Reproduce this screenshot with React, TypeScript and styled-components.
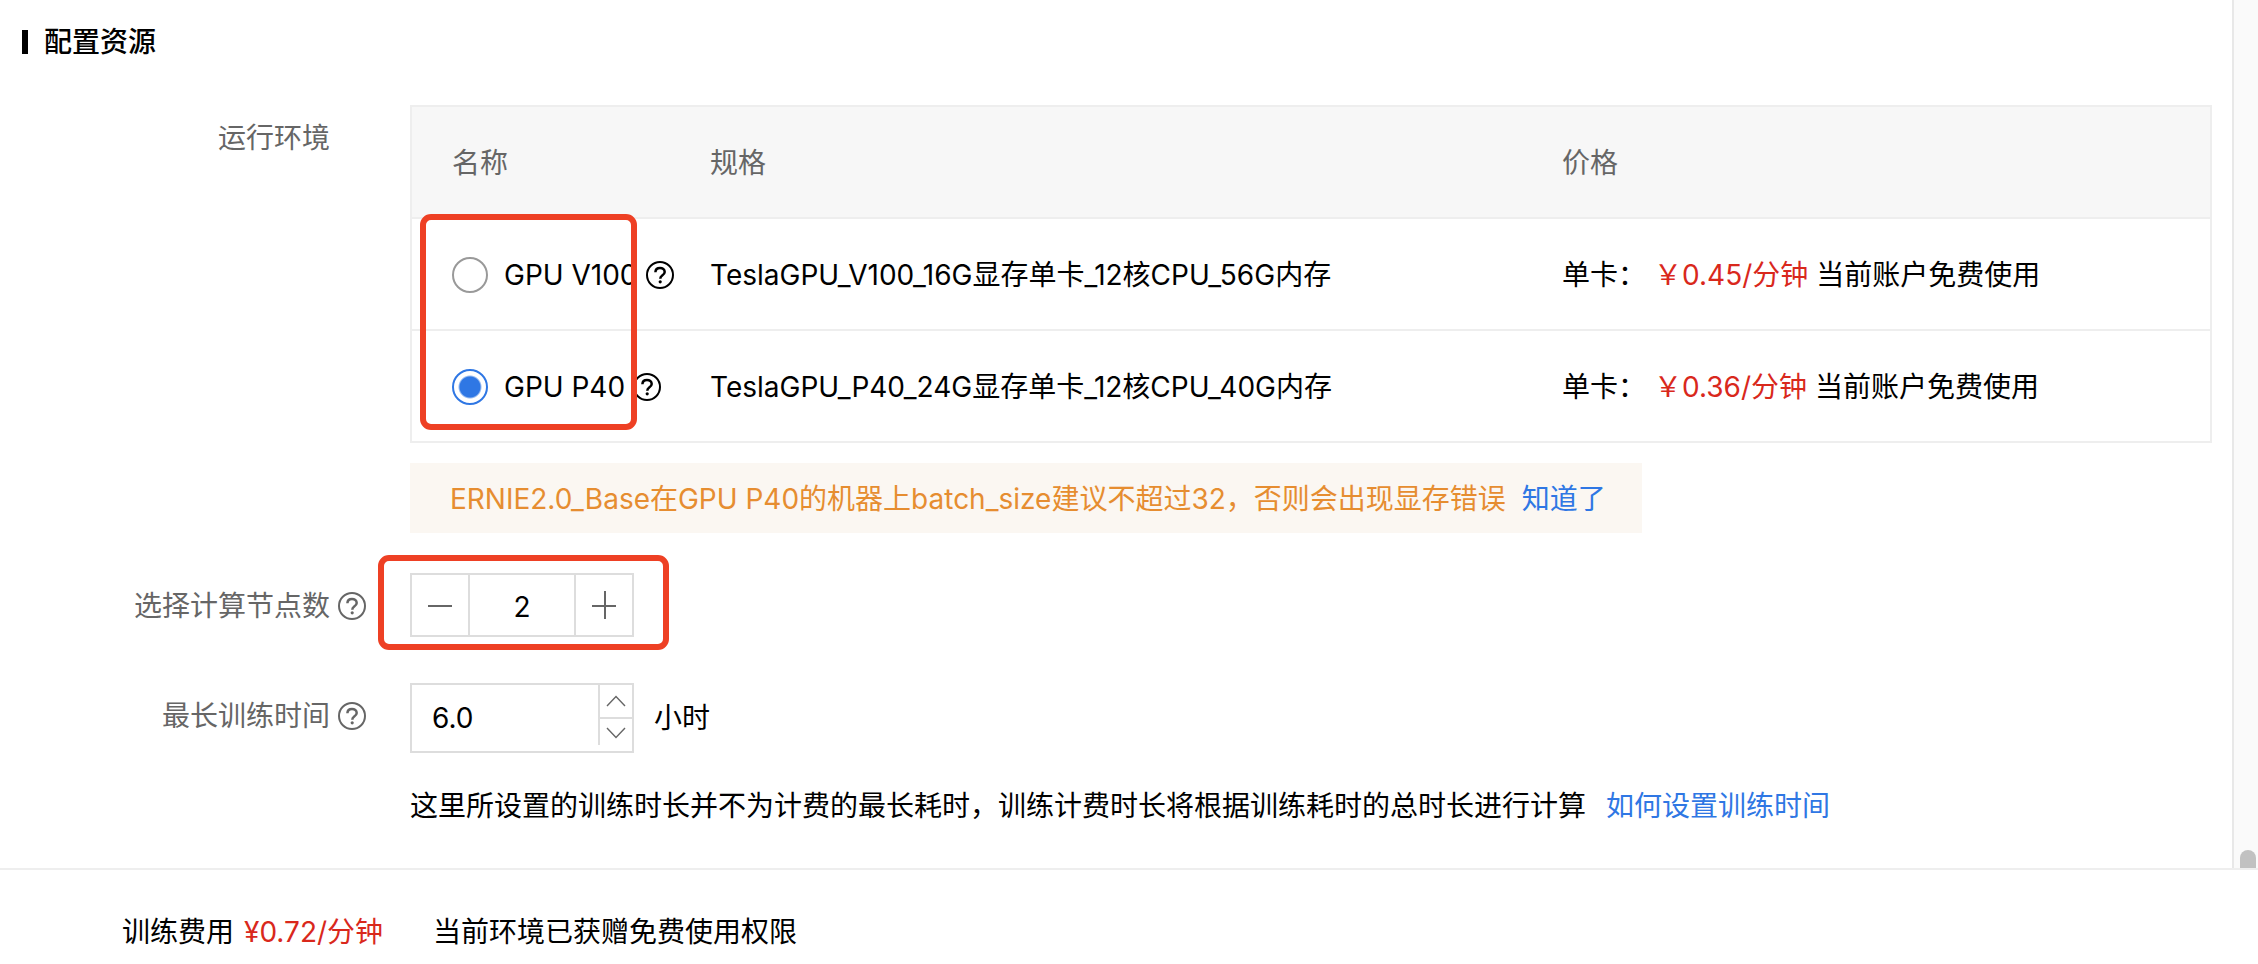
import React, { useState } from 'react';
import styled, { createGlobalStyle } from 'styled-components';

const GlobalStyle = createGlobalStyle`
  * { box-sizing: border-box; }
  body {
    margin: 0;
    background: #fff;
    color: #000;
    font-family: Inter, "Noto Sans CJK SC", sans-serif;
    font-size: 28px;
    line-height: 42px;
  }
  button, input { font: inherit; color: inherit; }
`;

const Page = styled.div`
  display: flex;
  flex-direction: column;
  min-height: 100vh;
`;

const Body = styled.div`
  flex: 1;
  display: flex;
`;

const Content = styled.main`
  flex: 1;
  min-width: 0;
  padding: 21px 20px 40px 0;
`;

const ScrollTrack = styled.div`
  width: 26px;
  display: flex;
  flex-direction: column;
  justify-content: flex-end;
  padding-left: 6px;
  border-left: 2px solid #e8e8e8;
  background: #fafafa;
`;

const ScrollThumb = styled.div`
  width: 16px;
  height: 18px;
  border-radius: 8px 8px 0 0;
  background: #c1c1c1;
`;

const Title = styled.h2`
  display: flex;
  align-items: center;
  gap: 16px;
  margin: 0 0 42px 22px;
  font-size: 28px;
  font-weight: 500;
  line-height: 42px;

  &::before {
    content: "";
    width: 6px;
    height: 24px;
    background: #000;
  }
`;

const Row = styled.div<{ $gap?: number }>`
  display: flex;
  align-items: flex-start;
  margin-top: ${(p) => p.$gap ?? 0}px;
`;

const LabelCell = styled.div`
  flex: none;
  display: flex;
  align-items: center;
  width: 410px;
  padding-top: 12px;
  color: #666;
`;

const LabelText = styled.label`
  width: 330px;
  margin-right: 8px;
  text-align: right;
`;

const Field = styled.div`
  position: relative;
  flex: 1;
  min-width: 0;
`;

const EnvTable = styled.table`
  width: 100%;
  table-layout: fixed;
  border-collapse: collapse;
  border: 2px solid #eee;

  tr { height: 112px; border-bottom: 2px solid #eee; }
  thead { background: #f7f7f7; color: #666; }
  th, td {
    padding: 2px 0 0 40px;
    text-align: left;
    font-weight: 400;
    white-space: nowrap;
  }
`;

const NameCell = styled.div`
  display: flex;
  align-items: center;
`;

const RadioLabel = styled.label`
  display: flex;
  align-items: center;
  gap: 16px;
  margin-right: 8px;
`;

const Radio = styled.input`
  appearance: none;
  width: 36px;
  height: 36px;
  margin: 0;
  border: 2px solid #999;
  border-radius: 50%;
  background: #fff;

  &:checked {
    border-color: #2f77e4;
    background: radial-gradient(circle, #2f77e4 10px, #fff 12px);
  }
`;

const Price = styled.span`
  margin: 0 8px;
  color: #d9281c;
`;

const Notice = styled.div`
  display: flex;
  align-items: center;
  gap: 16px;
  width: fit-content;
  height: 70px;
  margin-top: 20px;
  padding: 2px 36px 0 40px;
  background: #fbf7f2;
  color: #e68d30;
`;

const Link = styled.a`
  color: #2f77e4;
  text-decoration: none;
`;

const LinkButton = styled.button`
  padding: 0;
  border: 0;
  background: none;
  color: #2f77e4;
  cursor: pointer;
`;

const Stepper = styled.div`
  display: flex;
  width: 224px;
  height: 64px;
  border: 2px solid #ddd;
`;

const StepButton = styled.button`
  flex: none;
  display: grid;
  place-items: center;
  width: 56px;
  padding: 0;
  border: 0;
  background: #fff;
  color: #666;
`;

const CountInput = styled.input`
  flex: 1;
  min-width: 0;
  padding: 4px 0 0;
  border: solid #ddd;
  border-width: 0 2px;
  background: #fff;
  text-align: center;
`;

const TimeLine = styled.div`
  display: flex;
  align-items: center;
  gap: 20px;
`;

const TimeBox = styled.div`
  display: flex;
  align-items: flex-start;
  width: 224px;
  height: 70px;
  border: 2px solid #ddd;
`;

const TimeInput = styled.input`
  flex: 1;
  min-width: 0;
  height: 66px;
  padding: 0 0 0 20px;
  border: 0;
  background: none;
`;

const Arrows = styled.div`
  flex: none;
  width: 34px;
  height: 60px;
  border-left: 2px solid #ddd;
`;

const ArrowButton = styled.button`
  display: grid;
  place-items: center;
  width: 32px;
  height: 28px;
  padding: 0;
  border: 0;
  background: none;
  color: #666;

  &:first-child { height: 34px; border-bottom: 2px solid #ddd; }
`;

const Help = styled.div`
  display: flex;
  gap: 20px;
  margin-top: 32px;
`;

const Footer = styled.footer`
  display: flex;
  padding: 41px 0 11px 122px;
  border-top: 2px solid #eee;
`;

const FooterPrice = styled.span`
  margin: 0 50px 0 10px;
  color: #d9281c;
`;

const Highlight = styled.div<{ $x: number; $y: number; $w: number; $h: number }>`
  position: absolute;
  left: ${(p) => p.$x}px;
  top: ${(p) => p.$y}px;
  width: ${(p) => p.$w}px;
  height: ${(p) => p.$h}px;
  border: 6px solid #ee4024;
  border-radius: 11px;
  pointer-events: none;
`;

const IconBox = styled.svg`
  flex: none;
  width: 28px;
  height: 28px;
`;

const QuestionIcon = () => (
  <IconBox viewBox="0 0 28 28" fill="none" stroke="currentColor" strokeWidth="2" aria-hidden="true">
    <circle cx="14" cy="14" r="13" />
    <path d="M9.4 11.2C9.5 8.4 11.4 7 14 7c2.6 0 4.7 1.5 4.7 3.9 0 1.8-1.2 2.7-2.5 3.6-1.3.9-1.9 1.5-1.9 3.2" strokeWidth="2.5" />
    <circle cx="14.2" cy="20.8" r="1.6" fill="currentColor" stroke="none" />
  </IconBox>
);

const environments = [
  { id: 'v100', name: 'GPU V100', spec: 'TeslaGPU_V100_16G显存单卡_12核CPU_56G内存', price: '0.45' },
  { id: 'p40', name: 'GPU P40', spec: 'TeslaGPU_P40_24G显存单卡_12核CPU_40G内存', price: '0.36' },
];

export default function App() {
  const [env, setEnv] = useState('p40');
  const [count, setCount] = useState(2);
  const [hours, setHours] = useState('6.0');
  const shift = (d: number) => setHours((Number(hours) + d).toFixed(1));

  return (
    <Page>
      <GlobalStyle />
      <Body>
        <Content>
          <Title>配置资源</Title>
          <Row>
            <LabelCell>
              <LabelText as="span">运行环境</LabelText>
            </LabelCell>
            <Field>
              <EnvTable>
                <colgroup>
                  <col style={{ width: 259 }} />
                  <col style={{ width: 852 }} />
                  <col />
                </colgroup>
                <thead>
                  <tr>
                    <th>名称</th>
                    <th>规格</th>
                    <th>价格</th>
                  </tr>
                </thead>
                <tbody>
                  {environments.map((e) => (
                    <tr key={e.id}>
                      <td>
                        <NameCell>
                          <RadioLabel>
                            <Radio type="radio" name="env" checked={env === e.id} onChange={() => setEnv(e.id)} />
                            {e.name}
                          </RadioLabel>
                          <QuestionIcon />
                        </NameCell>
                      </td>
                      <td>{e.spec}</td>
                      <td>
                        单卡：
                        <Price>￥{e.price}/分钟</Price>
                        当前账户免费使用
                      </td>
                    </tr>
                  ))}
                </tbody>
              </EnvTable>
              <Highlight $x={10} $y={109} $w={217} $h={216} />
              <Notice>
                <span>ERNIE2.0_Base在GPU P40的机器上batch_size建议不超过32，否则会出现显存错误</span>
                <LinkButton type="button">知道了</LinkButton>
              </Notice>
            </Field>
          </Row>
          <Row $gap={40}>
            <LabelCell>
              <LabelText htmlFor="nodes">选择计算节点数</LabelText>
              <QuestionIcon />
            </LabelCell>
            <Field>
              <Stepper>
                <StepButton type="button" aria-label="减少" onClick={() => setCount(Math.max(1, count - 1))}>
                  <svg width="28" height="28" stroke="currentColor" strokeWidth="2">
                    <path d="M2 15H26" />
                  </svg>
                </StepButton>
                <CountInput id="nodes" value={count} onChange={(e) => setCount(Number(e.target.value) || 1)} />
                <StepButton type="button" aria-label="增加" onClick={() => setCount(count + 1)}>
                  <svg width="28" height="28" stroke="currentColor" strokeWidth="2">
                    <path d="M2 15H26M15 0V28" />
                  </svg>
                </StepButton>
              </Stepper>
              <Highlight $x={-32} $y={-18} $w={291} $h={95} />
            </Field>
          </Row>
          <Row $gap={46}>
            <LabelCell>
              <LabelText htmlFor="hours">最长训练时间</LabelText>
              <QuestionIcon />
            </LabelCell>
            <Field>
              <TimeLine>
                <TimeBox>
                  <TimeInput id="hours" value={hours} onChange={(e) => setHours(e.target.value)} />
                  <Arrows>
                    <ArrowButton type="button" aria-label="增加时间" onClick={() => shift(1)}>
                      <svg width="20" height="12" fill="none" stroke="currentColor" strokeWidth="1.4">
                        <path d="M1 11L10 1.5L19 11" />
                      </svg>
                    </ArrowButton>
                    <ArrowButton type="button" aria-label="减少时间" onClick={() => shift(-1)}>
                      <svg width="20" height="12" fill="none" stroke="currentColor" strokeWidth="1.4">
                        <path d="M1 1L10 10.5L19 1" />
                      </svg>
                    </ArrowButton>
                  </Arrows>
                </TimeBox>
                <span>小时</span>
              </TimeLine>
              <Help>
                <span>这里所设置的训练时长并不为计费的最长耗时，训练计费时长将根据训练耗时的总时长进行计算</span>
                <Link href="#help">如何设置训练时间</Link>
              </Help>
            </Field>
          </Row>
        </Content>
        <ScrollTrack>
          <ScrollThumb />
        </ScrollTrack>
      </Body>
      <Footer>
        <span>训练费用</span>
        <FooterPrice>¥0.72/分钟</FooterPrice>
        <span>当前环境已获赠免费使用权限</span>
      </Footer>
    </Page>
  );
}
